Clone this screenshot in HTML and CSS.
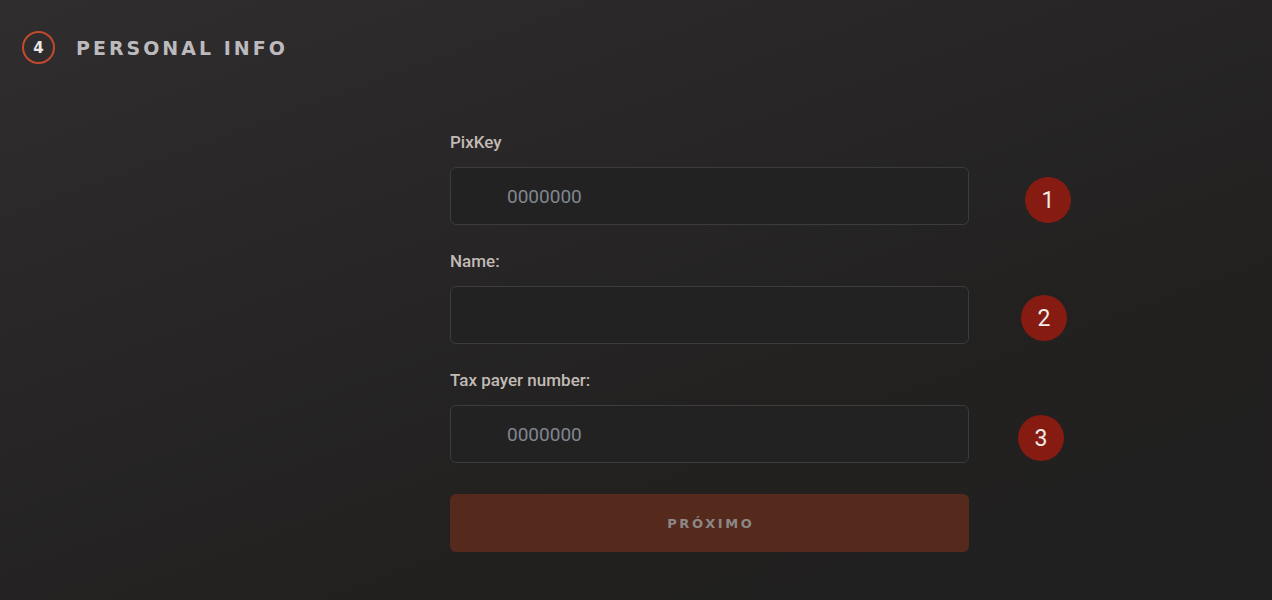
FILE: index.html
```html
<!DOCTYPE html>
<html lang="en">
<head>
<meta charset="utf-8">
<title>Personal info</title>
<link rel="stylesheet" href="styles.css">
</head>
<body>
<div class="page">
  <header class="step-header">
    <span class="step-num">4</span>
    <h1 class="step-title">PERSONAL INFO</h1>
  </header>
  <form class="form">
    <div class="field">
      <label class="label">PixKey</label>
      <div class="row">
        <input class="input" type="text" placeholder="0000000">
        <span class="marker m1">1</span>
      </div>
    </div>
    <div class="field">
      <label class="label">Name:</label>
      <div class="row">
        <input class="input" type="text">
        <span class="marker m2">2</span>
      </div>
    </div>
    <div class="field">
      <label class="label">Tax payer number:</label>
      <div class="row">
        <input class="input" type="text" placeholder="0000000">
        <span class="marker m3">3</span>
      </div>
    </div>
    <button class="btn" type="button">PRÓXIMO</button>
  </form>
</div>
</body>
</html>
```

FILE: styles.css
```css
* { box-sizing: border-box; }
html, body { margin: 0; height: 100%; }
body {
  background: linear-gradient(160deg, #2f2d2e 0%, #282627 35%, #222120 65%, #212020 100%);
  font-family: Roboto, "Liberation Sans", sans-serif;
  min-height: 600px;
}
.page { padding: 31px 0 0 22px; }
.step-header {
  display: flex;
  align-items: center;
  gap: 21px;
  height: 33px;
}
.step-num {
  width: 33px;
  height: 33px;
  border: 2px solid #c24a2d;
  border-radius: 50%;
  display: flex;
  align-items: center;
  justify-content: center;
  color: #ece7e4;
  font-family: "DejaVu Sans", sans-serif;
  font-weight: bold;
  font-size: 15px;
}
.step-title {
  margin: 0;
  font-family: "DejaVu Sans", sans-serif;
  font-weight: bold;
  font-size: 19px;
  letter-spacing: 3px;
  color: #bcbabd;
}
.form {
  width: 519px;
  margin: 68px 0 0 428px;
  display: flex;
  flex-direction: column;
  gap: 26px;
}
.field { display: flex; flex-direction: column; gap: 15px; }
.label {
  font-size: 17px;
  line-height: 20px;
  font-weight: 500;
  color: #c2bab5;
}
.row { position: relative; }
.input {
  display: block;
  width: 519px;
  height: 58px;
  background: #232222;
  border: 1px solid #3d3c3c;
  border-radius: 6px;
  padding: 0 0 0 56px;
  font-family: Roboto, "Liberation Sans", sans-serif;
  font-size: 19px;
  color: #ddd;
  outline: none;
}
.input::placeholder { color: #82868f; }
.marker {
  position: absolute;
  width: 46px;
  height: 46px;
  border-radius: 50%;
  background: #861b12;
  color: #f3ecea;
  font-size: 23px;
  display: flex;
  align-items: center;
  justify-content: center;
}
.m1 { left: 575px; top: 10px; }
.m2 { left: 571px; top: 9px; }
.m3 { left: 568px; top: 10px; }
.btn {
  margin-top: 5px;
  width: 519px;
  height: 58px;
  border: none;
  border-radius: 6px;
  background: #552a1c;
  color: #8d8786;
  font-family: "DejaVu Sans", sans-serif;
  font-weight: bold;
  font-size: 13px;
  letter-spacing: 2.6px;
  text-indent: 2.6px;
}
```
